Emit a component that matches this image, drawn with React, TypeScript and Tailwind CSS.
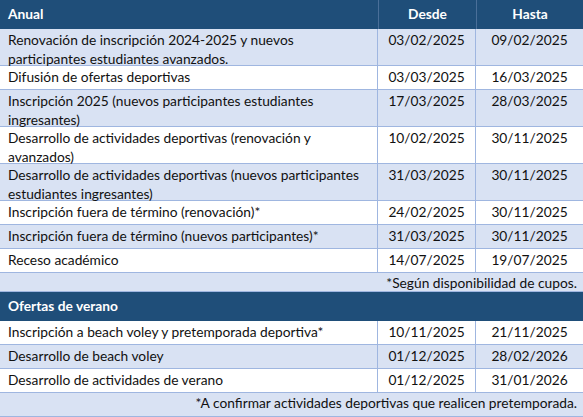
type Row = { label: string; desde: string; hasta: string; tall?: boolean; band: boolean };

const anual: Row[] = [
  { label: "Renovación de inscripción 2024-2025 y nuevos participantes estudiantes avanzados.", desde: "03/02/2025", hasta: "09/02/2025", tall: true, band: true },
  { label: "Difusión de ofertas deportivas", desde: "03/03/2025", hasta: "16/03/2025", band: false },
  { label: "Inscripción 2025 (nuevos participantes estudiantes ingresantes)", desde: "17/03/2025", hasta: "28/03/2025", tall: true, band: true },
  { label: "Desarrollo de actividades deportivas (renovación y avanzados)", desde: "10/02/2025", hasta: "30/11/2025", tall: true, band: false },
  { label: "Desarrollo de actividades deportivas (nuevos participantes estudiantes ingresantes)", desde: "31/03/2025", hasta: "30/11/2025", tall: true, band: true },
  { label: "Inscripción fuera de término (renovación)*", desde: "24/02/2025", hasta: "30/11/2025", band: false },
  { label: "Inscripción fuera de término (nuevos participantes)*", desde: "31/03/2025", hasta: "30/11/2025", band: true },
  { label: "Receso académico", desde: "14/07/2025", hasta: "19/07/2025", band: false },
];

const verano: Row[] = [
  { label: "Inscripción a beach voley y pretemporada deportiva*", desde: "10/11/2025", hasta: "21/11/2025", band: false },
  { label: "Desarrollo de beach voley", desde: "01/12/2025", hasta: "28/02/2026", band: true },
  { label: "Desarrollo de actividades de verano", desde: "01/12/2025", hasta: "31/01/2026", band: false },
];

function DataRow({ row }: { row: Row }) {
  const bg = row.band ? "bg-[#d9e2f3]" : "bg-white";
  const h = row.tall ? "h-[37px]" : "h-[24px]";
  return (
    <div className={`grid grid-cols-[378px_98px_107px] ${h} ${bg} border-b border-[#9fb6e0]`}>
      <div className="pl-[8px] pr-2 pt-[1px] leading-[19px] border-r border-[#9fb6e0]">{row.label}</div>
      <div className="text-center pt-[1px] leading-[19px] border-r border-[#9fb6e0]">{row.desde}</div>
      <div className="text-center pt-[1px] leading-[19px]">{row.hasta}</div>
    </div>
  );
}

function Header({ title, cols }: { title: string; cols: boolean }) {
  return (
    <div className="grid grid-cols-[378px_98px_107px] h-[29px] bg-[#1f4e79] text-white font-bold items-center">
      <div className="pl-[8px] h-full flex items-center">{title}</div>
      <div className={`h-full flex items-center justify-center ${cols ? "border-l border-[#4a6f99]" : ""}`}>{cols ? "Desde" : ""}</div>
      <div className={`h-full flex items-center justify-center ${cols ? "border-l border-[#4a6f99]" : ""}`}>{cols ? "Hasta" : ""}</div>
    </div>
  );
}

function Note({ text, h }: { text: string; h: string }) {
  return (
    <div className={`${h} bg-[#d9e2f3] border-b border-[#9fb6e0] flex items-start justify-end pr-[6px] pt-[1px] leading-[18px]`}>
      {text}
    </div>
  );
}

export default function App() {
  return (
    <div
      className="w-[583px] h-[417px] overflow-hidden bg-white text-[13.75px] text-[#111]"
      style={{ fontFamily: "Lato, 'Open Sans', sans-serif" }}
    >
      <Header title="Anual" cols />
      {anual.map((r) => (
        <DataRow key={r.label} row={r} />
      ))}
      <Note text="*Según disponibilidad de cupos." h="h-[19px]" />
      <Header title="Ofertas de verano" cols={false} />
      {verano.map((r) => (
        <DataRow key={r.label} row={r} />
      ))}
      <Note text="*A confirmar actividades deportivas que realicen  pretemporada." h="h-[24px]" />
    </div>
  );
}
